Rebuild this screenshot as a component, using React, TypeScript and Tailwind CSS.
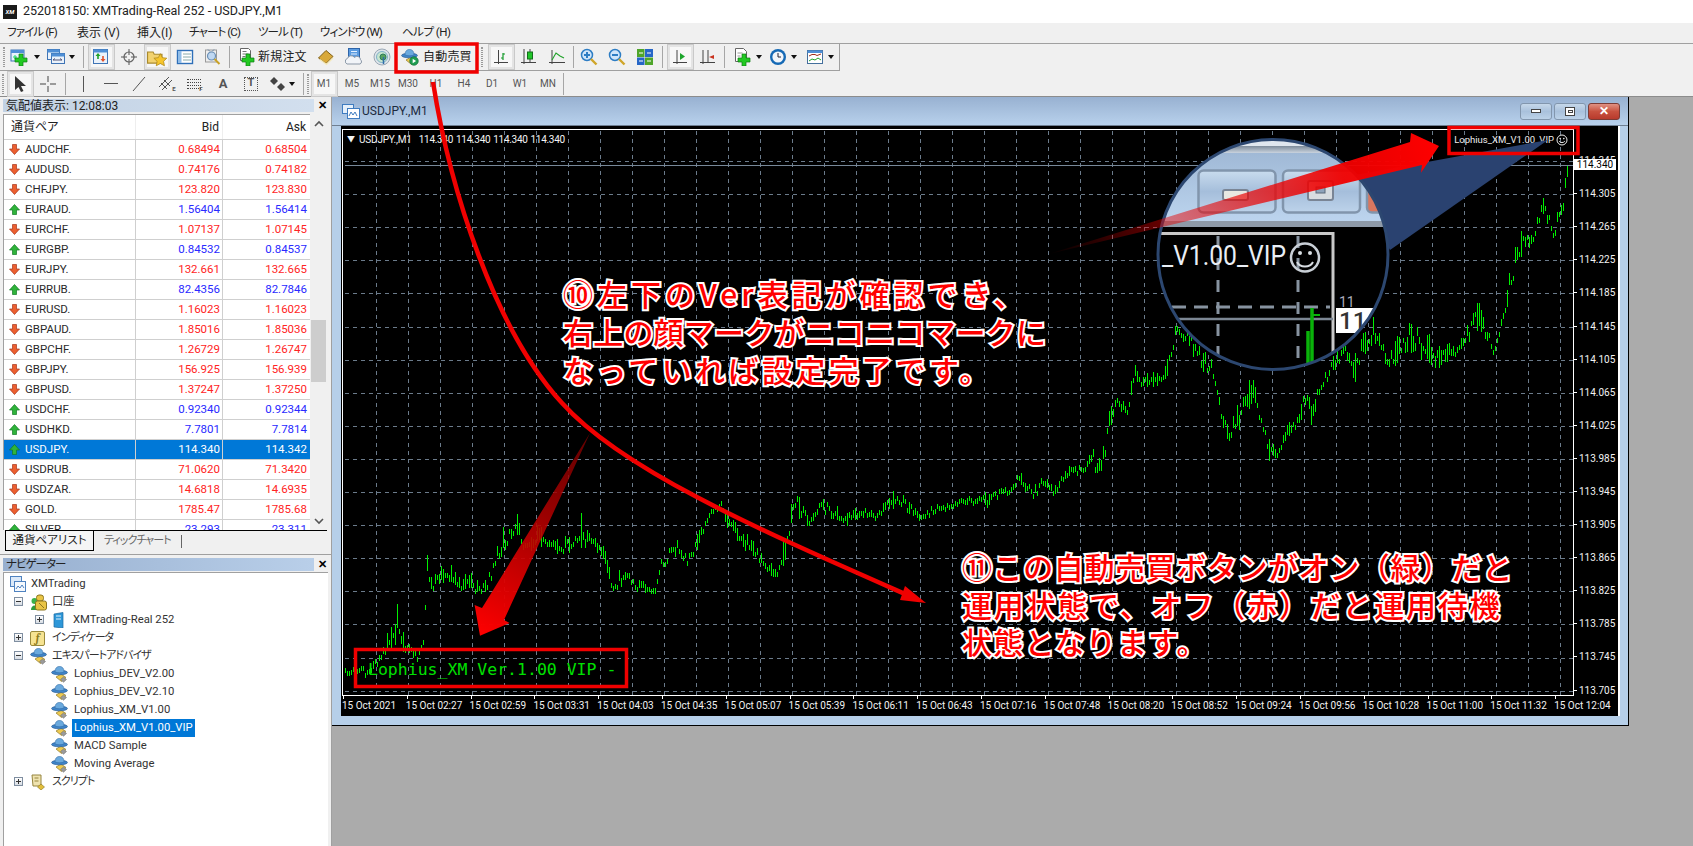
import React from 'react';

type Pair = { sym: string; bid: string; ask: string; up?: boolean; sel?: boolean };

const pairs: Pair[] = [
  { sym: 'AUDCHF.', bid: '0.68494', ask: '0.68504' },
  { sym: 'AUDUSD.', bid: '0.74176', ask: '0.74182' },
  { sym: 'CHFJPY.', bid: '123.820', ask: '123.830' },
  { sym: 'EURAUD.', bid: '1.56404', ask: '1.56414', up: true },
  { sym: 'EURCHF.', bid: '1.07137', ask: '1.07145' },
  { sym: 'EURGBP.', bid: '0.84532', ask: '0.84537', up: true },
  { sym: 'EURJPY.', bid: '132.661', ask: '132.665' },
  { sym: 'EURRUB.', bid: '82.4356', ask: '82.7846', up: true },
  { sym: 'EURUSD.', bid: '1.16023', ask: '1.16023' },
  { sym: 'GBPAUD.', bid: '1.85016', ask: '1.85036' },
  { sym: 'GBPCHF.', bid: '1.26729', ask: '1.26747' },
  { sym: 'GBPJPY.', bid: '156.925', ask: '156.939' },
  { sym: 'GBPUSD.', bid: '1.37247', ask: '1.37250' },
  { sym: 'USDCHF.', bid: '0.92340', ask: '0.92344', up: true },
  { sym: 'USDHKD.', bid: '7.7801', ask: '7.7814', up: true },
  { sym: 'USDJPY.', bid: '114.340', ask: '114.342', up: true, sel: true },
  { sym: 'USDRUB.', bid: '71.0620', ask: '71.3420' },
  { sym: 'USDZAR.', bid: '14.6818', ask: '14.6935' },
  { sym: 'GOLD.', bid: '1785.47', ask: '1785.68' },
  { sym: 'SILVER.', bid: '23.293', ask: '23.311', up: true },
];

const priceLabels = [
  '114.345', '114.305', '114.265', '114.225', '114.185', '114.145', '114.105', '114.065', '114.025',
  '113.985', '113.945', '113.905', '113.865', '113.825', '113.785', '113.745', '113.705',
];

const timeLabels = [
  '15 Oct 2021', '15 Oct 02:27', '15 Oct 02:59', '15 Oct 03:31', '15 Oct 04:03', '15 Oct 04:35', '15 Oct 05:07',
  '15 Oct 05:39', '15 Oct 06:11', '15 Oct 06:43', '15 Oct 07:16', '15 Oct 07:48', '15 Oct 08:20', '15 Oct 08:52',
  '15 Oct 09:24', '15 Oct 09:56', '15 Oct 10:28', '15 Oct 11:00', '15 Oct 11:32', '15 Oct 12:04',
];

// price envelope traced off the chart: [x, top, bottom]
const envelope: number[][] = [
  [345, 667, 677], [351, 667, 677], [360, 660, 672], [366, 668, 680], [376, 655, 672], [387, 633, 653], [396, 600, 647],
  [405, 640, 653], [417, 653, 660], [424, 627, 647], [426, 545, 610], [433, 570, 600], [444, 560, 582], [462, 577, 593],
  [471, 570, 590], [478, 577, 603], [487, 580, 592], [498, 537, 567], [516, 510, 537], [523, 537, 557], [535, 523, 550],
  [548, 537, 547], [562, 543, 557], [580, 513, 557], [591, 528, 550], [605, 550, 570], [612, 580, 600], [626, 560, 587],
  [637, 580, 593], [655, 587, 597], [660, 560, 573], [676, 538, 557], [687, 557, 567], [698, 533, 550], [708, 510, 523],
  [721, 495, 510], [726, 513, 530], [744, 533, 550], [758, 547, 563], [776, 570, 582], [785, 530, 563], [794, 491, 517],
  [810, 517, 530], [820, 498, 513], [845, 513, 528], [860, 508, 520], [876, 512, 518], [897, 487, 507], [921, 513, 523],
  [939, 502, 512], [964, 497, 505], [987, 492, 508], [1013, 485, 492], [1018, 470, 483], [1032, 487, 500], [1044, 477, 487],
  [1054, 487, 498], [1067, 467, 480], [1086, 465, 470], [1092, 445, 467], [1097, 463, 482], [1105, 440, 460], [1111, 387, 427],
  [1117, 387, 407], [1128, 407, 423], [1134, 357, 387], [1142, 375, 395], [1166, 363, 383], [1172, 333, 358], [1178, 320, 340],
  [1199, 343, 367], [1214, 363, 383], [1220, 403, 417], [1228, 423, 450], [1241, 397, 427], [1254, 373, 403], [1262, 420, 440],
  [1276, 443, 483], [1285, 427, 443], [1297, 417, 430], [1305, 383, 413], [1312, 403, 432], [1320, 377, 397], [1331, 360, 377],
  [1344, 343, 360], [1354, 350, 387], [1374, 317, 343], [1387, 350, 380], [1408, 320, 353], [1432, 337, 373], [1460, 343, 357],
  [1478, 300, 330], [1494, 343, 362], [1503, 307, 320], [1512, 257, 293], [1523, 220, 250], [1530, 237, 253], [1543, 197, 217],
  [1554, 217, 245], [1563, 197, 212], [1566, 162, 190],
];

function buildBars() {
  let seed = 7;
  const rnd = () => {
    seed = (seed * 16807) % 2147483647;
    return seed / 2147483647;
  };
  let d = '';
  let k = 0;
  for (let x = 345; x <= 1567; x += 2) {
    while (k < envelope.length - 2 && envelope[k + 1][0] < x) k++;
    const a = envelope[k];
    const b = envelope[k + 1];
    const t = Math.min(1, (x - a[0]) / (b[0] - a[0]));
    const top = a[1] + (b[1] - a[1]) * t;
    const bot = a[2] + (b[2] - a[2]) * t;
    const h = bot - top;
    const y1 = Math.round(top + h * rnd() * 0.65 - 2 + rnd() * 4);
    const y2 = Math.max(y1 + 5, Math.round(bot - h * rnd() * 0.65 - 2 + rnd() * 4));
    d += `M${x + 0.5} ${y1}V${y2}`;
  }
  return d;
}
const barsPath = buildBars();

const gridX = Array.from({ length: 38 }, (_, i) => 376.5 + i * 32);
const gridY = priceLabels.map((_, i) => Math.round(162 + i * 33.1) + 0.5);

/* ---- little toolbar icons ---- */

const Plus = ({ x = 7, y = 7, s = 4 }: { x?: number; y?: number; s?: number }) => (
  <path
    d={`M${x + s} ${y}h${s}v${s}h${s}v${s}h-${s}v${s}h-${s}v-${s}h-${s}v-${s}h${s}z`}
    fill="#22c922"
    stroke="#0b7d12"
    strokeWidth="0.7"
  />
);

const Ico = ({ children, size = 18 }: { children: React.ReactNode; size?: number }) => (
  <svg width={size} height={size} viewBox="0 0 18 18" className="shrink-0">
    {children}
  </svg>
);

const Win = ({ x = 1, y = 2, w = 13, h = 11 }: { x?: number; y?: number; w?: number; h?: number }) => (
  <g>
    <rect x={x} y={y} width={w} height={h} fill="#eaf2fb" stroke="#3f74b5" />
    <rect x={x} y={y} width={w} height={3} fill="#4f8fd6" />
  </g>
);

const IcoNewChart = () => (
  <Ico>
    <Win />
    <path d="M3 9h4M5 7v4" stroke="#2d6" />
    <Plus x={5} y={6} s={4} />
  </Ico>
);
const IcoProfiles = () => (
  <Ico>
    <Win x={0.5} y={1.5} w={12} h={10} />
    <Win x={4.5} y={5.5} w={13} h={10} />
    <path d="M6 12h9M6 12l2-1.5M15 12l-2-1.5" stroke="#557" fill="none" />
  </Ico>
);
const IcoMarket = () => (
  <Ico>
    <Win x={1.5} y={1.5} w={14} h={14} />
    <path d="M6 5l-2.5 3h1.7v3h1.6V8h1.7z" fill="#21a32a" />
    <path d="M11 14l2.5-3h-1.7V8h-1.6v3H8.5z" fill="#e2512a" />
  </Ico>
);
const IcoCross = () => (
  <Ico>
    <circle cx="9" cy="9" r="5" fill="none" stroke="#666" strokeWidth="1.2" />
    <path d="M9 1v6M9 11v6M1 9h6M11 9h6" stroke="#555" />
  </Ico>
);
const IcoFolder = () => (
  <Ico size={20}>
    <path d="M0.5 4.5h5l1 2h7v8h-13z" fill="#f2d26f" stroke="#a98a2e" />
    <path d="M12 6l1.8 3.6 4 .5-2.9 2.8.8 4-3.7-2-3.7 2 .8-4-2.9-2.8 4-.5z" fill="#f6c52c" stroke="#b08a1a" strokeWidth="0.7" />
  </Ico>
);
const IcoTerminal = () => (
  <Ico>
    <rect x="1.5" y="2.5" width="15" height="13" fill="#fff" stroke="#2e6fb8" strokeWidth="1.4" />
    <rect x="2" y="3" width="3.5" height="12" fill="#8fbce8" />
    <path d="M7 6h8M7 9h8M7 12h8" stroke="#8aa" />
  </Ico>
);
const IcoTester = () => (
  <Ico>
    <rect x="1.5" y="2" width="11" height="12" fill="#eee" stroke="#999" />
    <circle cx="7.5" cy="8" r="4" fill="#bfd8f2" stroke="#6a8fb5" strokeWidth="1.2" />
    <path d="M10.5 11l5 5" stroke="#c9a227" strokeWidth="2" />
    <path d="M4 1.5l2 2M10 1.5l-2 2" stroke="#68a" />
  </Ico>
);
const IcoOrder = () => (
  <Ico>
    <path d="M2.5 0.5h8l2 2v10h-10z" fill="#fff" stroke="#666" />
    <path d="M4.5 3.5h4M4.5 6h6M4.5 8.5h3" stroke="#777" />
    <Plus x={4} y={6} s={4} />
  </Ico>
);
const IcoBook = () => (
  <Ico>
    <path d="M1.5 10L9 2.5l7 6-7 7z" fill="#d9a93a" stroke="#7f5f15" />
    <path d="M3 11.5l6.5 5L16 10" fill="none" stroke="#f5e9b8" strokeWidth="1.3" />
  </Ico>
);
const IcoCloud = () => (
  <Ico>
    <rect x="3.5" y="0.5" width="11" height="10" fill="#5a9be0" stroke="#2e64a8" />
    <path d="M6 3.5h6M6 6h6" stroke="#e4f0ff" />
    <path d="M2 16a3 3 0 0 1 .5-5.6 4 4 0 0 1 7-1 3.5 3.5 0 0 1 6 2.3A2.5 2.5 0 0 1 15 16z" fill="#f1f4f8" stroke="#8a97a6" />
  </Ico>
);
const IcoSignal = () => (
  <Ico>
    <circle cx="9" cy="9" r="8" fill="#dfe5ea" stroke="#9aa8b5" />
    <circle cx="9" cy="9" r="5.5" fill="#c8e6cf" stroke="#7fb2c9" />
    <circle cx="10" cy="9" r="3" fill="#57a25f" stroke="#2e7c5c" />
    <path d="M10.5 9v7" stroke="#2f6ea8" strokeWidth="1.5" />
  </Ico>
);
const Hat = () => (
  <g>
    <path d="M5 12l5-3 5 3.5-4.5 4z" fill="#eec94f" stroke="#8c7a2c" strokeWidth="0.7" />
    <ellipse cx="8.5" cy="7.5" rx="8" ry="2.3" fill="#3f84c9" stroke="#285a8e" strokeWidth="0.6" />
    <path d="M4 7c0-4 2-5.5 4.5-5.5S13 3 13 7c-2 1-7 1-9 0z" fill="#6aa9dd" stroke="#2f6aa5" strokeWidth="0.6" />
  </g>
);
const IcoAuto = () => (
  <Ico>
    <Hat />
    <circle cx="13" cy="13" r="4.3" fill="#1e9d52" stroke="#0d6a33" strokeWidth="0.6" />
    <path d="M11.7 10.8l3.4 2.2-3.4 2.2z" fill="#fff" />
  </Ico>
);
const IcoBars = () => (
  <Ico>
    <path d="M6.5 2v14M2 14.5h14" stroke="#444" />
    <path d="M11 5v7M11 6h2M9 10h2" stroke="#159a2b" strokeWidth="1.2" />
  </Ico>
);
const IcoCandle = () => (
  <Ico>
    <path d="M4 1v15M1 14.5h15" stroke="#444" />
    <path d="M10 1v13" stroke="#444" />
    <rect x="7.5" y="4" width="5" height="7" fill="#21c62a" stroke="#136e1a" />
  </Ico>
);
const IcoLine = () => (
  <Ico>
    <path d="M4 2v14M1 14.5h16" stroke="#444" />
    <path d="M4 12l4-7 4 3 4 2" stroke="#21a32a" fill="none" strokeWidth="1.1" />
  </Ico>
);
const IcoZoom = ({ plus }: { plus?: boolean }) => (
  <Ico>
    <circle cx="7" cy="7" r="5.5" fill="#cfe5fa" stroke="#2d7dc4" strokeWidth="1.5" />
    <path d="M4 7h6" stroke="#2d7dc4" strokeWidth="2" />
    {plus && <path d="M7 4v6" stroke="#2d7dc4" strokeWidth="2" />}
    <path d="M11 11l5.5 5.5" stroke="#cfa62a" strokeWidth="2.4" />
  </Ico>
);
const IcoTile = () => (
  <Ico>
    <rect x="1" y="1" width="7.5" height="8" fill="#4fa52a" />
    <rect x="9" y="1" width="8" height="8" fill="#2666c7" />
    <rect x="1" y="9.5" width="7.5" height="7.5" fill="#2666c7" />
    <rect x="9" y="9.5" width="8" height="7.5" fill="#4fa52a" />
    <path d="M3 5h4M11 5h4M3 13h4M11 13h4" stroke="#fff" />
  </Ico>
);
const IcoAutoscroll = () => (
  <Ico>
    <path d="M6 2v14M2 14.5h14" stroke="#444" />
    <path d="M9 5v7l5-3.5z" fill="#1da52b" />
  </Ico>
);
const IcoShift = () => (
  <Ico>
    <path d="M4 2v14M1 14.5h15M9 2v12" stroke="#444" />
    <path d="M15 7l-5 2 5 2z" fill="#c9331f" />
  </Ico>
);
const IcoTemplate = () => (
  <Ico>
    <path d="M1.5 0.5h8l3 3v10h-11z" fill="#fff" stroke="#666" />
    <path d="M3.5 5h5M3.5 8h3" stroke="#999" />
    <Plus x={4} y={6} s={4} />
  </Ico>
);
const IcoClock = () => (
  <Ico>
    <circle cx="9" cy="9" r="8" fill="#1569b5" />
    <circle cx="9" cy="9" r="5.6" fill="#f1f5fa" />
    <path d="M9 5v4h3" stroke="#223" fill="none" />
  </Ico>
);
const IcoIndic = () => (
  <Ico>
    <rect x="1.5" y="2.5" width="15" height="13" fill="#fff" stroke="#446f9c" />
    <rect x="1.5" y="2.5" width="15" height="2.5" fill="#4f8fd6" />
    <path d="M3 8l3-1.5h3l2 1 4-1.5" stroke="#a02c1a" fill="none" />
    <path d="M3 13l3-2 3 1 3-2 3 2" stroke="#21a32a" fill="none" />
  </Ico>
);

const Caret = () => (
  <svg width="6" height="4" viewBox="0 0 6 4" className="shrink-0">
    <path d="M0 0h6L3 4z" fill="#111" />
  </svg>
);

const Grip = () => <div className="h-[20px] w-[2px] border-x border-dotted border-[#9a9a9a]" />;

const Sep = () => <div className="h-[22px] w-px bg-[#a6a6a6]" />;

const Btn = ({ children, on }: { children?: React.ReactNode; on?: boolean }) => (
  <div className="flex h-full w-[28px] items-center justify-center">
    <div
      className={`flex h-[24px] w-[25px] items-center justify-center ${on ? 'border-2 border-[#e4e4e4] bg-[#f7f7f7] outline outline-1 outline-[#c9c9c9]' : ''}`}
    >
      {children}
    </div>
  </div>
);

const TfBtn = ({ label, on }: { label: string; on?: boolean }) => (
  <Btn on={on}>
    <span className="text-[10px] text-[#555]">{label}</span>
  </Btn>
);

function TopToolbar() {
  return (
    <div className="flex h-[27px] w-[840px] items-center border-r border-b border-[#9f9f9f]">
      <div className="flex w-[8px] justify-center"><Grip /></div>
      <div className="flex w-[37px] items-center gap-[6px] pl-[2px]"><IcoNewChart /><Caret /></div>
      <div className="flex w-[34px] items-center gap-[4px] pl-[2px]"><IcoProfiles /><Caret /></div>
      <div className="flex w-[8px] justify-center"><Sep /></div>
      <Btn on><IcoMarket /></Btn>
      <Btn><IcoCross /></Btn>
      <Btn on><IcoFolder /></Btn>
      <Btn><IcoTerminal /></Btn>
      <Btn><IcoTester /></Btn>
      <div className="flex w-[5px] justify-center"><Sep /></div>
      <div className="flex w-[80px] items-center gap-[2px] pl-[6px]">
        <IcoOrder />
        <span className="text-[12px] tracking-[0.2px] text-[#222]">新規注文</span>
      </div>
      <Btn><IcoBook /></Btn>
      <Btn><IcoCloud /></Btn>
      <Btn><IcoSignal /></Btn>
      <div className="flex w-[81px] items-center gap-[4px] pl-[5px]">
        <IcoAuto />
        <span className="text-[12px] tracking-[0.2px] text-[#222]">自動売買</span>
      </div>
      <div className="flex w-[10px] justify-center"><Grip /></div>
      <Btn on><IcoBars /></Btn>
      <Btn><IcoCandle /></Btn>
      <Btn><IcoLine /></Btn>
      <div className="flex w-[4px] justify-center"><Sep /></div>
      <Btn><IcoZoom plus /></Btn>
      <Btn><IcoZoom /></Btn>
      <Btn><IcoTile /></Btn>
      <div className="flex w-[7px] justify-center"><Sep /></div>
      <Btn on><IcoAutoscroll /></Btn>
      <Btn><IcoShift /></Btn>
      <div className="flex w-[5px] justify-center"><Sep /></div>
      <div className="flex w-[36px] items-center gap-[4px] pl-[7px]"><IcoTemplate /><Caret /></div>
      <div className="flex w-[37px] items-center gap-[4px] pl-[6px]"><IcoClock /><Caret /></div>
      <div className="flex w-[38px] items-center gap-[4px] pl-[6px]"><IcoIndic /><Caret /></div>
    </div>
  );
}

function DrawToolbar() {
  return (
    <div className="flex h-[26px] items-center border-b border-[#8c8c8c]">
      <div className="flex w-[6px] justify-center"><Grip /></div>
      <Btn on>
        <svg width="14" height="16" viewBox="0 0 14 16"><path d="M2 0v14l3.5-3 2.5 5 2.5-1-2.5-5H13z" fill="#333" /></svg>
      </Btn>
      <Btn>
        <svg width="16" height="16" viewBox="0 0 16 16"><path d="M8 0v6M8 10v6M0 8h6M10 8h6" stroke="#444" /></svg>
      </Btn>
      <div className="flex w-[7px] justify-center"><Sep /></div>
      <Btn><div className="h-[16px] w-px bg-[#555]" /></Btn>
      <Btn><div className="h-px w-[14px] bg-[#555]" /></Btn>
      <Btn>
        <svg width="16" height="16" viewBox="0 0 16 16"><path d="M2 15L14 1" stroke="#555" /></svg>
      </Btn>
      <Btn>
        <svg width="18" height="18" viewBox="0 0 18 18">
          <path d="M1 12L11 2M4 15L14 5M3 8l6 6M6 5l6 6" stroke="#555" />
        </svg>
        <span className="-ml-[4px] mt-[10px] text-[6px] font-bold text-[#555]">E</span>
      </Btn>
      <Btn>
        <div className="flex flex-col gap-[2px]">
          <div className="w-[14px] border-t border-dotted border-[#444]" />
          <div className="w-[14px] border-t border-dotted border-[#444]" />
          <div className="w-[14px] border-t border-dotted border-[#444]" />
          <div className="w-[14px] border-t border-dotted border-[#444]" />
        </div>
        <span className="-ml-[2px] mt-[10px] text-[6px] font-bold text-[#555]">F</span>
      </Btn>
      <Btn><span className="text-[13px] font-bold text-[#555]">A</span></Btn>
      <Btn>
        <div className="flex h-[14px] w-[14px] items-center justify-center border border-dotted border-[#555]">
          <span className="text-[11px] font-bold text-[#555]">T</span>
        </div>
      </Btn>
      <div className="flex w-[35px] items-center gap-[3px] pl-[5px]">
        <svg width="16" height="14" viewBox="0 0 16 14">
          <path d="M4 0l4 4-4 4-4-4z" fill="#444" />
          <path d="M11 6l4 4-4 4-4-4z" fill="#444" />
        </svg>
        <Caret />
      </div>
      <div className="flex w-[6px] justify-center"><Sep /></div>
      <div className="flex w-[4px] justify-center"><Grip /></div>
      <TfBtn label="M1" on />
      <TfBtn label="M5" />
      <TfBtn label="M15" />
      <TfBtn label="M30" />
      <TfBtn label="H1" />
      <TfBtn label="H4" />
      <TfBtn label="D1" />
      <TfBtn label="W1" />
      <TfBtn label="MN" />
      <div className="flex w-[2px] justify-center"><Sep /></div>
    </div>
  );
}

const TrendArrow = ({ up }: { up?: boolean }) => (
  <svg width="11" height="11" viewBox="0 0 11 11" className="shrink-0">
    {up ? (
      <path d="M5.5 .5L10.5 6H7.5v4.5h-4V6H.5z" fill="#2fb33a" stroke="#127a24" strokeWidth="0.7" />
    ) : (
      <path d="M5.5 10.5L10.5 5H7.5V.5h-4V5H.5z" fill="#ec5f30" stroke="#a8341a" strokeWidth="0.7" />
    )}
  </svg>
);

function MarketWatch() {
  return (
    <div className="flex h-[458px] flex-col border-b border-[#a0a0a0] bg-[#f0f0f0]">
      <div className="mt-[2px] flex h-[13px] items-center">
        <div className="ml-[3px] flex h-full w-[311px] items-center bg-gradient-to-r from-[#c2d2e4] to-[#d2dfee] pl-[3px] text-[12px] leading-none text-[#222]">
          気配値表示: 12:08:03
        </div>
        <span className="ml-[4px] text-[11px] font-bold leading-none text-black">✕</span>
      </div>
      <div className="mt-[2px] flex h-[416px] pl-[3px]">
        <div className="h-full w-[307px] overflow-hidden border-t border-l border-[#a0a0a0] bg-white">
          <div className="grid h-[25px] grid-cols-[132px_87px_87px] border-b border-[#cfcfcf] text-[12px] text-[#222]">
            <div className="flex items-center border-r border-[#eee] pl-[7px]">通貨ペア</div>
            <div className="flex items-center justify-end border-r border-[#eee] pr-[3px]">Bid</div>
            <div className="flex items-center justify-end pr-[4px]">Ask</div>
          </div>
          {pairs.map((p) => (
            <div
              key={p.sym}
              className={`grid h-[20px] grid-cols-[132px_87px_87px] border-b border-[#cfcfcf] text-[11.5px] ${p.sel ? 'bg-[#0078d7] text-white' : p.up ? 'text-[#2a2aff]' : 'text-[#ff2424]'}`}
            >
              <div className={`flex items-center gap-[5px] border-r border-[#cfcfcf] pl-[5px] ${p.sel ? 'text-white' : 'text-[#2a2a2a]'}`}>
                <TrendArrow up={p.up} />
                {p.sym}
              </div>
              <div className="flex items-center justify-end border-r border-[#cfcfcf] pr-[2px]">{p.bid}</div>
              <div className="flex items-center justify-end pr-[3px]">{p.ask}</div>
            </div>
          ))}
        </div>
        <div className="flex w-[16px] flex-col items-center pl-px">
          <svg width="10" height="8" viewBox="0 0 10 8" className="mt-[6px]"><path d="M1 6l4-4 4 4" stroke="#555" strokeWidth="1.6" fill="none" /></svg>
          <div className="mt-[192px] h-[62px] w-[15px] bg-[#cdcdcd]" />
          <svg width="10" height="8" viewBox="0 0 10 8" className="mt-[135px]"><path d="M1 2l4 4 4-4" stroke="#555" strokeWidth="1.6" fill="none" /></svg>
        </div>
      </div>
      <div className="flex h-[22px] items-start pl-[5px] pr-[4px]">
        <div className="flex h-[21px] w-full items-start border-t border-black">
          <div className="flex h-[20px] w-[89px] items-center justify-center border-x border-b border-black bg-[#f5f5f5] text-[11.5px] text-[#222]">
            通貨ペアリスト
          </div>
          <div className="ml-[8px] flex h-[20px] items-center gap-[10px] text-[11px] tracking-[-1px] text-[#666]">
            <span className="pl-[2px]">ティックチャート</span>
            <span className="h-[13px] w-px bg-[#666]" />
          </div>
        </div>
      </div>
    </div>
  );
}

const TreeBox = ({ open }: { open?: boolean }) => (
  <div className="relative h-[9px] w-[9px] shrink-0 border border-[#7f8ea0] bg-gradient-to-b from-white to-[#d8dde4]">
    <div className="absolute top-[3px] left-[1px] h-px w-[5px] bg-[#333]" />
    {!open && <div className="absolute top-[1px] left-[3px] h-[5px] w-px bg-[#333]" />}
  </div>
);

const EaIcon = () => (
  <svg width="18" height="18" viewBox="0 0 18 18" className="shrink-0">
    <Hat />
    <path d="M12.5 12l3 2.5-3 2.7-3-2.7z" fill="#9b9b9b" stroke="#666" strokeWidth="0.5" />
  </svg>
);

type TreeRow = { label: string; left: number; icon: React.ReactNode; box?: 'open' | 'closed'; sel?: boolean; kana?: boolean };

const treeRows: TreeRow[] = [
  {
    label: 'XMTrading',
    left: 10,
    icon: (
      <svg width="16" height="16" viewBox="0 0 16 16" className="shrink-0 mr-[5px]">
        <rect x="0.5" y="0.5" width="11" height="10" fill="#dbe9f9" stroke="#4e82c0" />
        <rect x="4.5" y="5.5" width="11" height="10" fill="#f5f9fe" stroke="#4e82c0" />
        <path d="M6 13l2-3 2 2 2-3 2 3" stroke="#4e82c0" fill="none" />
      </svg>
    ),
  },
  {
    label: '口座',
    left: 30,
    box: 'open',
    icon: (
      <svg width="17" height="17" viewBox="0 0 17 17" className="shrink-0 mr-[5px]">
        <circle cx="4.5" cy="7" r="3" fill="#3bb14a" />
        <path d="M1 16c0-6 7-6 7 0z" fill="#2f9c3d" />
        <rect x="6.5" y="1" width="7" height="6" rx="2.5" fill="#e9c445" stroke="#8d7620" />
        <rect x="5.5" y="7" width="11" height="9" rx="2" fill="#e9c445" stroke="#8d7620" />
        <path d="M9 9l5 5" stroke="#8d7620" />
      </svg>
    ),
  },
  {
    label: 'XMTrading-Real 252',
    left: 53,
    box: 'closed',
    icon: (
      <svg width="12" height="16" viewBox="0 0 12 16" className="shrink-0 mr-[8px]">
        <path d="M1 2l9-1.5V16l-9-1z" fill="#2e97d8" stroke="#1b6aa3" strokeWidth="0.7" />
        <path d="M3 4h5M3 7h5" stroke="#dff1fc" />
      </svg>
    ),
  },
  {
    label: 'インディケータ',
    left: 30,
    box: 'closed',
    kana: true,
    icon: (
      <div className="mr-[7px] flex h-[15px] w-[15px] shrink-0 items-center justify-center rounded-[2px] border border-[#9a8a3c] bg-[#f6e392] font-serif text-[11px] font-bold italic leading-none text-[#8c7a1c]">
        f
      </div>
    ),
  },
  {
    label: 'エキスパートアドバイザ',
    left: 30,
    box: 'open',
    kana: true,
    icon: <div className="mr-[4px]"><EaIcon /></div>,
  },
  { label: 'Lophius_DEV_V2.00', left: 51, icon: <div className="mr-[5px]"><EaIcon /></div> },
  { label: 'Lophius_DEV_V2.10', left: 51, icon: <div className="mr-[5px]"><EaIcon /></div> },
  { label: 'Lophius_XM_V1.00', left: 51, icon: <div className="mr-[5px]"><EaIcon /></div> },
  { label: 'Lophius_XM_V1.00_VIP', left: 51, sel: true, icon: <div className="mr-[3px]"><EaIcon /></div> },
  { label: 'MACD Sample', left: 51, icon: <div className="mr-[5px]"><EaIcon /></div> },
  { label: 'Moving Average', left: 51, icon: <div className="mr-[5px]"><EaIcon /></div> },
  {
    label: 'スクリプト',
    left: 30,
    box: 'closed',
    kana: true,
    icon: (
      <svg width="16" height="16" viewBox="0 0 16 16" className="shrink-0 mr-[6px]">
        <path d="M2 1h9v11H3z" fill="#efe3b0" stroke="#96853f" />
        <path d="M4.5 4h4M4.5 7h4" stroke="#96853f" />
        <path d="M11 10l3.5 3-3.5 3-3.5-3z" fill="#e2be3a" stroke="#86701c" strokeWidth="0.6" />
      </svg>
    ),
  },
];

function Navigator() {
  return (
    <div className="flex flex-1 flex-col bg-[#f0f0f0]">
      <div className="mt-[3px] flex h-[13px] items-center">
        <div className="ml-[3px] flex h-full w-[311px] items-center bg-gradient-to-r from-[#97afcf] to-[#b9cfe9] pl-[3px] text-[11.5px] leading-none tracking-[-1px] text-[#222]">
          ナビゲーター
        </div>
        <span className="ml-[4px] text-[11px] font-bold leading-none text-black">✕</span>
      </div>
      <div className="mt-[1px] ml-[3px] mr-[3px] flex-1 border-t border-l border-[#a0a0a0] bg-white pt-[2px]">
        {treeRows.map((r) => (
          <div key={r.label} className="relative flex h-[18px] items-center text-[11.3px] text-[#333]">
            {r.box && (
              <div className={`absolute top-[4px] ${r.left === 53 ? 'left-[31px]' : 'left-[10px]'}`}>
                <TreeBox open={r.box === 'open'} />
              </div>
            )}
            {r.left === 10 && <div className="w-[6px]" />}
            {r.left === 30 && <div className="w-[26px]" />}
            {r.left === 53 && <div className="w-[49px]" />}
            {r.left === 51 && <div className="w-[47px]" />}
            {r.icon}
            <span className={r.sel ? 'flex h-[18px] items-center bg-[#0078d7] px-[2px] text-white' : r.kana ? 'text-[11px] tracking-[-1px]' : ''}>{r.label}</span>
          </div>
        ))}
      </div>
    </div>
  );
}

function WinBtn({ close, children }: { close?: boolean; children: React.ReactNode }) {
  return (
    <div
      className={`flex h-[17px] w-[32px] items-center justify-center rounded-[3px] border ${close ? 'border-[#7c3b35] bg-gradient-to-b from-[#e09183] via-[#c8513f] to-[#b83a2c]' : 'border-[#8296ad] bg-gradient-to-b from-[#c6d8ea] via-[#a9c1dc] to-[#bcd2e8]'}`}
    >
      {children}
    </div>
  );
}

function ChartWindow() {
  return (
    <div className="flex h-[629px] w-[1297px] flex-col border-r border-b border-black bg-[#b6cfe9]">
      {/* title bar */}
      <div className="flex h-[29px] items-center border-b border-[#6f7f92] bg-gradient-to-b from-[#98b1d1] to-[#b8d1ec] pl-[10px] pr-[8px]">
        <svg width="18" height="15" viewBox="0 0 18 15" className="mr-[2px]">
          <rect x="0.5" y="0.5" width="11" height="9" fill="#e5f0fb" stroke="#3f7cc0" />
          <rect x="5.5" y="4.5" width="12" height="10" fill="#fff" stroke="#3f7cc0" />
          <path d="M7 12l2-4 2 3 2-3 2 4" stroke="#3f7cc0" fill="none" />
        </svg>
        <span className="text-[12px] text-[#1c2b40]">USDJPY.,M1</span>
        <div className="ml-auto flex gap-[2px]">
          <WinBtn><div className="h-[4px] w-[10px] border border-[#444] bg-white" /></WinBtn>
          <WinBtn><div className="flex h-[9px] w-[10px] items-center justify-center border border-[#444] bg-white"><div className="h-[3px] w-[5px] border border-[#444]" /></div></WinBtn>
          <WinBtn close><span className="text-[12px] font-black leading-none text-white">✕</span></WinBtn>
        </div>
      </div>

      {/* chart */}
      <div className="ml-[9px] mr-[8px] flex h-[590px] flex-col border-r-2 border-white bg-black pt-[3px] pl-[1px]">
        <div className="flex h-[567px]">
          <div className="relative h-[567px] w-[1232px] border border-white">
            <svg
              viewBox="343 131 1230 565"
              width="1230"
              height="565"
              className="block"
              shapeRendering="crispEdges"
            >
              {gridX.map((x) => (
                <path key={x} d={`M${x} 132V696`} stroke="#6b7b8b" strokeDasharray="4 4" />
              ))}
              {gridY.map((y) => (
                <path key={y} d={`M345 ${y}H1573`} stroke="#6b7b8b" strokeDasharray="4 4" />
              ))}
              <path d="M345 166.5H1573" stroke="#778899" />
              <path d={barsPath} stroke="#00f000" fill="none" />
            </svg>
            <div className="absolute top-[3px] left-[4px] flex items-center gap-[3px] text-[10px] leading-[13px] whitespace-nowrap text-[#f4f4f4]">
              <span className="mr-[1px] text-[8px] leading-none">▼</span>
              <span className="mr-[4px] tracking-[-0.2px]">USDJPY.,M1</span>
              <span className="tracking-[-0.3px]">114.340</span>
              <span className="tracking-[-0.3px]">114.340</span>
              <span className="tracking-[-0.3px]">114.340</span>
              <span className="tracking-[-0.3px]">114.340</span>
            </div>
            <div className="absolute top-[3px] right-[5px] flex items-center gap-[2px] text-[9.5px] leading-[13px] text-[#eee]">
              <span>Lophius_XM_V1.00_VIP</span>
              <svg width="12" height="12" viewBox="0 0 12 12">
                <circle cx="6" cy="6" r="5" fill="none" stroke="#eee" />
                <circle cx="4.2" cy="4.6" r="0.8" fill="#eee" />
                <circle cx="7.8" cy="4.6" r="0.8" fill="#eee" />
                <path d="M3.2 7.2c1 1.8 4.6 1.8 5.6 0" fill="none" stroke="#eee" />
              </svg>
            </div>
            <div className="absolute top-[530px] left-[25px] font-['DejaVu_Sans_Mono',monospace] text-[16.5px] leading-[20px] whitespace-pre text-[#00e000]">
              Lophius_XM Ver.1.00 VIP -
            </div>
          </div>
          {/* price axis */}
          <div className="relative w-[45px] pt-[15px] text-[10px] text-[#f2f2f2]">
            {priceLabels.map((p) => (
              <div key={p} className="flex h-[33.1px] items-center">
                <div className="mr-[2px] h-px w-[3px] bg-white" />
                <span>{p}</span>
              </div>
            ))}
            <div className="absolute top-[30px] left-0 flex h-[11px] w-[42px] items-center justify-center bg-white text-[10px] leading-none text-black">
              114.340
            </div>
          </div>
        </div>
        {/* time axis */}
        <div className="flex h-[19px] text-[10px] leading-none whitespace-nowrap text-[#f2f2f2]">
          {timeLabels.map((t) => (
            <div key={t} className="w-[64px]">
              <div className="ml-[1px] h-[3px] w-px bg-white" />
              <span className="mt-[2px] block">{t}</span>
            </div>
          ))}
        </div>
      </div>
    </div>
  );
}

function Magnifier() {
  return (
    <g>
      <defs>
        <clipPath id="lens">
          <circle cx="1273" cy="254.5" r="115" />
        </clipPath>
        <linearGradient id="lensTop" x1="0" y1="0" x2="0" y2="1">
          <stop offset="0" stopColor="#a0b9d6" />
          <stop offset="1" stopColor="#bcd4ee" />
        </linearGradient>
        <linearGradient id="lensBtn" x1="0" y1="0" x2="0" y2="1">
          <stop offset="0" stopColor="#c9dcee" />
          <stop offset="0.5" stopColor="#a5bedb" />
          <stop offset="1" stopColor="#bdd3ea" />
        </linearGradient>
        <linearGradient id="lensEdge" x1="0" y1="0" x2="0" y2="1">
          <stop offset="0" stopColor="#7d8b9b" />
          <stop offset="1" stopColor="#c9d3de" />
        </linearGradient>
        <linearGradient id="ptrFade" gradientUnits="userSpaceOnUse" x1="1047" y1="255" x2="1440" y2="145">
          <stop offset="0" stopColor="#e60000" stopOpacity="0" />
          <stop offset="0.3" stopColor="#e60000" stopOpacity="0.45" />
          <stop offset="0.75" stopColor="#f00000" stopOpacity="0.95" />
          <stop offset="1" stopColor="#ff0000" />
        </linearGradient>
      </defs>
      <path d="M1548 140L1350 176 1390 250z" fill="#2a4270" />
      <circle cx="1273" cy="254.5" r="115" fill="#000" />
      <g clipPath="url(#lens)">
        <rect x="1150" y="136" width="250" height="10" fill="#dfe6ee" />
        <rect x="1150" y="146" width="250" height="7" fill="url(#lensEdge)" />
        <rect x="1150" y="153" width="250" height="68" fill="url(#lensTop)" />
        <rect x="1150" y="221" width="250" height="6" fill="#8e9aa8" />
        <rect x="1198.5" y="170.5" width="77" height="42" rx="5" fill="url(#lensBtn)" stroke="#8195ac" strokeWidth="2.5" />
        <rect x="1283" y="170.5" width="77" height="42" rx="5" fill="url(#lensBtn)" stroke="#8195ac" strokeWidth="2.5" />
        <rect x="1367" y="170.5" width="60" height="42" rx="5" fill="#d9775f" stroke="#8195ac" strokeWidth="2.5" />
        <rect x="1223" y="190" width="25" height="10" rx="2" fill="#e8e8e2" stroke="#7a8595" strokeWidth="2" />
        <rect x="1308" y="181" width="25" height="19" rx="2" fill="#d8dce0" stroke="#7a8595" strokeWidth="2" />
        <rect x="1316" y="187" width="9" height="6" fill="#8fa3bb" stroke="#5b6878" />
        <path d="M1150 233.5H1333V380" fill="none" stroke="#c8c8c8" strokeWidth="3" />
        <path d="M1218 236V380M1298 236V380" stroke="#8793a0" strokeWidth="3" strokeDasharray="12 10" />
        <path d="M1150 307H1330" stroke="#8793a0" strokeWidth="3" strokeDasharray="14 8" />
        <path d="M1150 319H1333" stroke="#7c8794" strokeWidth="2.5" />
        <text
          x="1162"
          y="265"
          fontSize="28"
          fill="#e9eef5"
          textLength={124}
          lengthAdjust="spacingAndGlyphs"
          style={{ fontFamily: 'Roboto, sans-serif' }}
        >
          _V1.00_VIP
        </text>
        <circle cx="1305" cy="257.5" r="14" fill="none" stroke="#c9cfd6" strokeWidth="2.5" />
        <circle cx="1300" cy="253" r="2" fill="#d8dde2" />
        <circle cx="1310" cy="253" r="2" fill="#d8dde2" />
        <path d="M1297 262c3 6 13 6 16 0" fill="none" stroke="#d8dde2" strokeWidth="2" />
        <rect x="1336" y="308" width="42" height="25" fill="#fff" />
        <text x="1339" y="329" fontSize="24" fontWeight="500" fill="#333" style={{ fontFamily: 'Roboto, sans-serif' }}>
          11
        </text>
        <text x="1339" y="307" fontSize="14" fill="#aab" style={{ fontFamily: 'Roboto, sans-serif' }}>
          11
        </text>
        <path d="M1312 308V370M1308 331V370" stroke="#0ab30a" strokeWidth="3.5" />
        <path d="M1312 315h8" stroke="#0ab30a" strokeWidth="2" />
      </g>
      <circle cx="1273" cy="254.5" r="115" fill="none" stroke="#2c4770" strokeWidth="3" />
      <path d="M1047 254.5L1410 142 1411 133 1439 146 1421 172.7 1422 165z" fill="url(#ptrFade)" />
    </g>
  );
}

function Overlay() {
  return (
    <svg className="pointer-events-none absolute inset-0" width="1693" height="846" viewBox="0 0 1693 846">
      <defs>
        <linearGradient id="downFade" gradientUnits="userSpaceOnUse" x1="590" y1="433" x2="480" y2="635">
          <stop offset="0" stopColor="#7a0000" stopOpacity="0.8" />
          <stop offset="1" stopColor="#ff0000" />
        </linearGradient>
      </defs>
      <Magnifier />
      {/* frames */}
      <rect x="396" y="44" width="81" height="28" fill="none" stroke="#f00000" strokeWidth="3.5" />
      <rect x="1449" y="127.5" width="129" height="26" fill="none" stroke="#f00000" strokeWidth="3.5" />
      <rect x="355.5" y="649.5" width="271" height="37" fill="none" stroke="#f00000" strokeWidth="3.5" />
      {/* arrow down to the version label */}
      <path d="M590 433L504 620 509.6 623 480 635.7 474.6 605 482 608z" fill="url(#downFade)" />
      {/* long arrow from the auto trading button */}
      <path d="M433 82C450 190 495 330 562 403C622 470 760 530 905 594" fill="none" stroke="#f00000" strokeWidth="4.5" />
      <path d="M926 603L905 586 900 600z" fill="#f00000" />
    </svg>
  );
}

const noteClass =
  "pointer-events-none absolute font-['Noto_Sans_CJK_JP',sans-serif] text-[30px] font-medium whitespace-nowrap text-[#ff0000] [font-feature-settings:normal] [-webkit-text-stroke:4px_white] [paint-order:stroke_fill]";

export default function App() {
  return (
    <div className="relative flex h-[846px] w-[1693px] flex-col overflow-hidden bg-[#f0f0f0] font-['Roboto','Noto_Sans_CJK_JP',sans-serif] [font-feature-settings:'palt']">
      {/* title bar */}
      <div className="flex h-[23px] items-center bg-white pl-[3px] text-[12.5px] text-[#222]">
        <div className="mr-[6px] flex h-[14px] w-[14px] items-center justify-center bg-[#1a1a1a] text-[6px] font-bold italic leading-none text-white">
          XM
        </div>
        252018150: XMTrading-Real 252 - USDJPY.,M1
      </div>
      {/* menu */}
      <div className="flex h-[21px] items-center border-b border-[#a0a0a0] pl-[7px] text-[12px] text-[#222]">
        <span className="w-[70px] text-[11.5px] tracking-[-0.9px]">ファイル (F)</span>
        <span className="w-[60px]">表示 (V)</span>
        <span className="w-[52px]">挿入(I)</span>
        <span className="w-[69px] text-[11.5px] tracking-[-0.9px]">チャート (C)</span>
        <span className="w-[62px] text-[11.5px] tracking-[-0.9px]">ツール (T)</span>
        <span className="w-[82px] text-[11.5px] tracking-[-0.9px]">ウィンドウ (W)</span>
        <span className="text-[11.5px] tracking-[-0.5px]">ヘルプ (H)</span>
      </div>
      <TopToolbar />
      <DrawToolbar />
      {/* workspace */}
      <div className="flex flex-1">
        <div className="flex w-[332px] flex-col border-r border-[#a0a0a0]">
          <MarketWatch />
          <Navigator />
        </div>
        <div className="flex-1 bg-[#ababab]">
          <ChartWindow />
        </div>
      </div>

      <Overlay />

      <div className={`${noteClass} top-[274px] left-[563px] leading-[38px]`}>
        <div className="tracking-[4px]">⑩左下のVer表記が確認でき、</div>
        <div className="tracking-[0.2px]">右上の顔マークがニコニコマークに</div>
        <div className="tracking-[3.4px]">なっていれば設定完了です。</div>
      </div>
      <div className={`${noteClass} top-[548px] left-[962px] leading-[37.5px]`}>
        <div className="tracking-[0.6px]">⑪この自動売買ボタンがオン（緑）だと</div>
        <div className="tracking-[1.8px]">運用状態で、オフ（赤）だと運用待機</div>
        <div className="tracking-[1.2px]">状態となります。</div>
      </div>
    </div>
  );
}
